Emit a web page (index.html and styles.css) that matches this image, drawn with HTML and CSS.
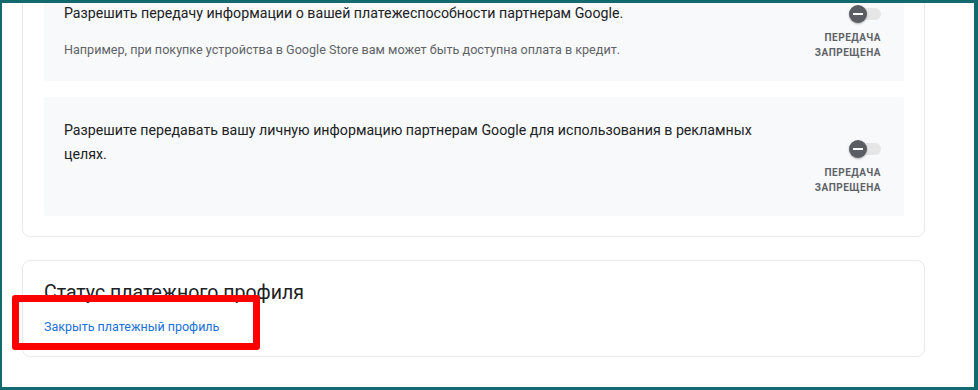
FILE: index.html
```html
<!DOCTYPE html>
<html lang="ru">
<head>
  <meta charset="UTF-8" />
  <meta name="viewport" content="width=device-width, initial-scale=1.0"/>
  <title>Платежный профиль</title>
  <link rel="stylesheet" href="styles.css">
</head>
<body>

  <div class="frame">
    <div class="page">

      <div class="card card-privacy">
        <div class="option">
          <div class="option-text">
            <p class="option-title">Разрешить передачу информации о вашей платежеспособности партнерам Google.</p>
            <p class="option-note">Например, при покупке устройства в Google Store вам может быть доступна оплата в кредит.</p>
          </div>
          <div class="option-state">
            <span class="toggle"><span class="knob"></span></span>
            <span class="state-label">Передача<br>запрещена</span>
          </div>
        </div>

        <div class="option option-tall">
          <div class="option-text">
            <p class="option-title">Разрешите передавать вашу личную информацию партнерам Google для использования в рекламных целях.</p>
          </div>
          <div class="option-state">
            <span class="toggle"><span class="knob"></span></span>
            <span class="state-label">Передача<br>запрещена</span>
          </div>
        </div>
      </div>

      <div class="card card-status">
        <h2 class="card-title">Статус платежного профиля</h2>
        <a class="link" href="#">Закрыть платежный профиль</a>
        <span class="highlight"></span>
      </div>

    </div>
  </div>

</body>
</html>
```

FILE: styles.css
```css
html, body {
  margin: 0;
  padding: 0;
}

body {
  background-color: #fff;
  font-family: Roboto, "Noto Sans", Arial, sans-serif;
  color: #202124;
}

.frame {
  box-sizing: border-box;
  width: 978px;
  height: 390px;
  border: 3px solid #12696e;
  border-left-width: 2px;
  border-right-width: 4px;
  overflow: hidden;
}

.page {
  width: 903px;
  margin-left: 20px;
}

.card {
  position: relative;
  box-sizing: border-box;
  border: 1px solid #e8eaed;
  border-radius: 8px;
  background-color: #fff;
}

.card-privacy {
  margin-top: -44px;
  padding: 20px 20px 20px 21px;
  display: flex;
  flex-direction: column;
  gap: 16px;
}

.option {
  display: flex;
  justify-content: space-between;
  background-color: #f8f9fa;
  padding: 21px 23px 21px 20px;
  border-radius: 2px;
}

.option-tall {
  min-height: 77px;
}

.option-text {
  max-width: 700px;
}

.option-title {
  margin: 0;
  font-size: 14.2px;
  line-height: 24px;
  color: #202124;
}

.option-note {
  margin: 15px 0 0;
  font-size: 12.6px;
  line-height: 20px;
  color: #5f6368;
}

.option-state {
  align-self: flex-end;
  display: flex;
  flex-direction: column;
  align-items: flex-end;
}

.toggle {
  position: relative;
  display: block;
  width: 32px;
  height: 18px;
  margin-bottom: 7px;
}

.toggle::before {
  content: "";
  position: absolute;
  left: 4px;
  right: 0;
  top: 3px;
  height: 12px;
  border-radius: 6px;
  background-color: #e6e6e6;
}

.knob {
  position: absolute;
  left: 0;
  top: 0;
  width: 18px;
  height: 18px;
  border-radius: 50%;
  background-color: #5a5e62;
  box-shadow: 0 1px 2px rgba(0,0,0,0.3);
}

.knob::after {
  content: "";
  position: absolute;
  left: 4px;
  right: 4px;
  top: 8px;
  height: 2px;
  background-color: #fff;
}

.state-label {
  text-align: right;
  text-transform: uppercase;
  font-size: 10px;
  font-weight: 700;
  letter-spacing: 0.5px;
  line-height: 15px;
  color: #5f6368;
}

.card-status {
  margin-top: 23px;
  height: 97px;
  padding: 20px 21px;
}

.card-title {
  margin: 0;
  font-size: 19.5px;
  font-weight: 400;
  line-height: 24px;
  color: #202124;
}

.link {
  display: inline-block;
  margin-top: 14px;
  font-size: 12.5px;
  font-weight: 400;
  color: #1a6fd8;
  text-decoration: none;
}

.highlight {
  position: absolute;
  left: -11px;
  top: 34px;
  width: 234px;
  height: 41px;
  border: 7px solid #ff0000;
  border-radius: 3px;
}
```
